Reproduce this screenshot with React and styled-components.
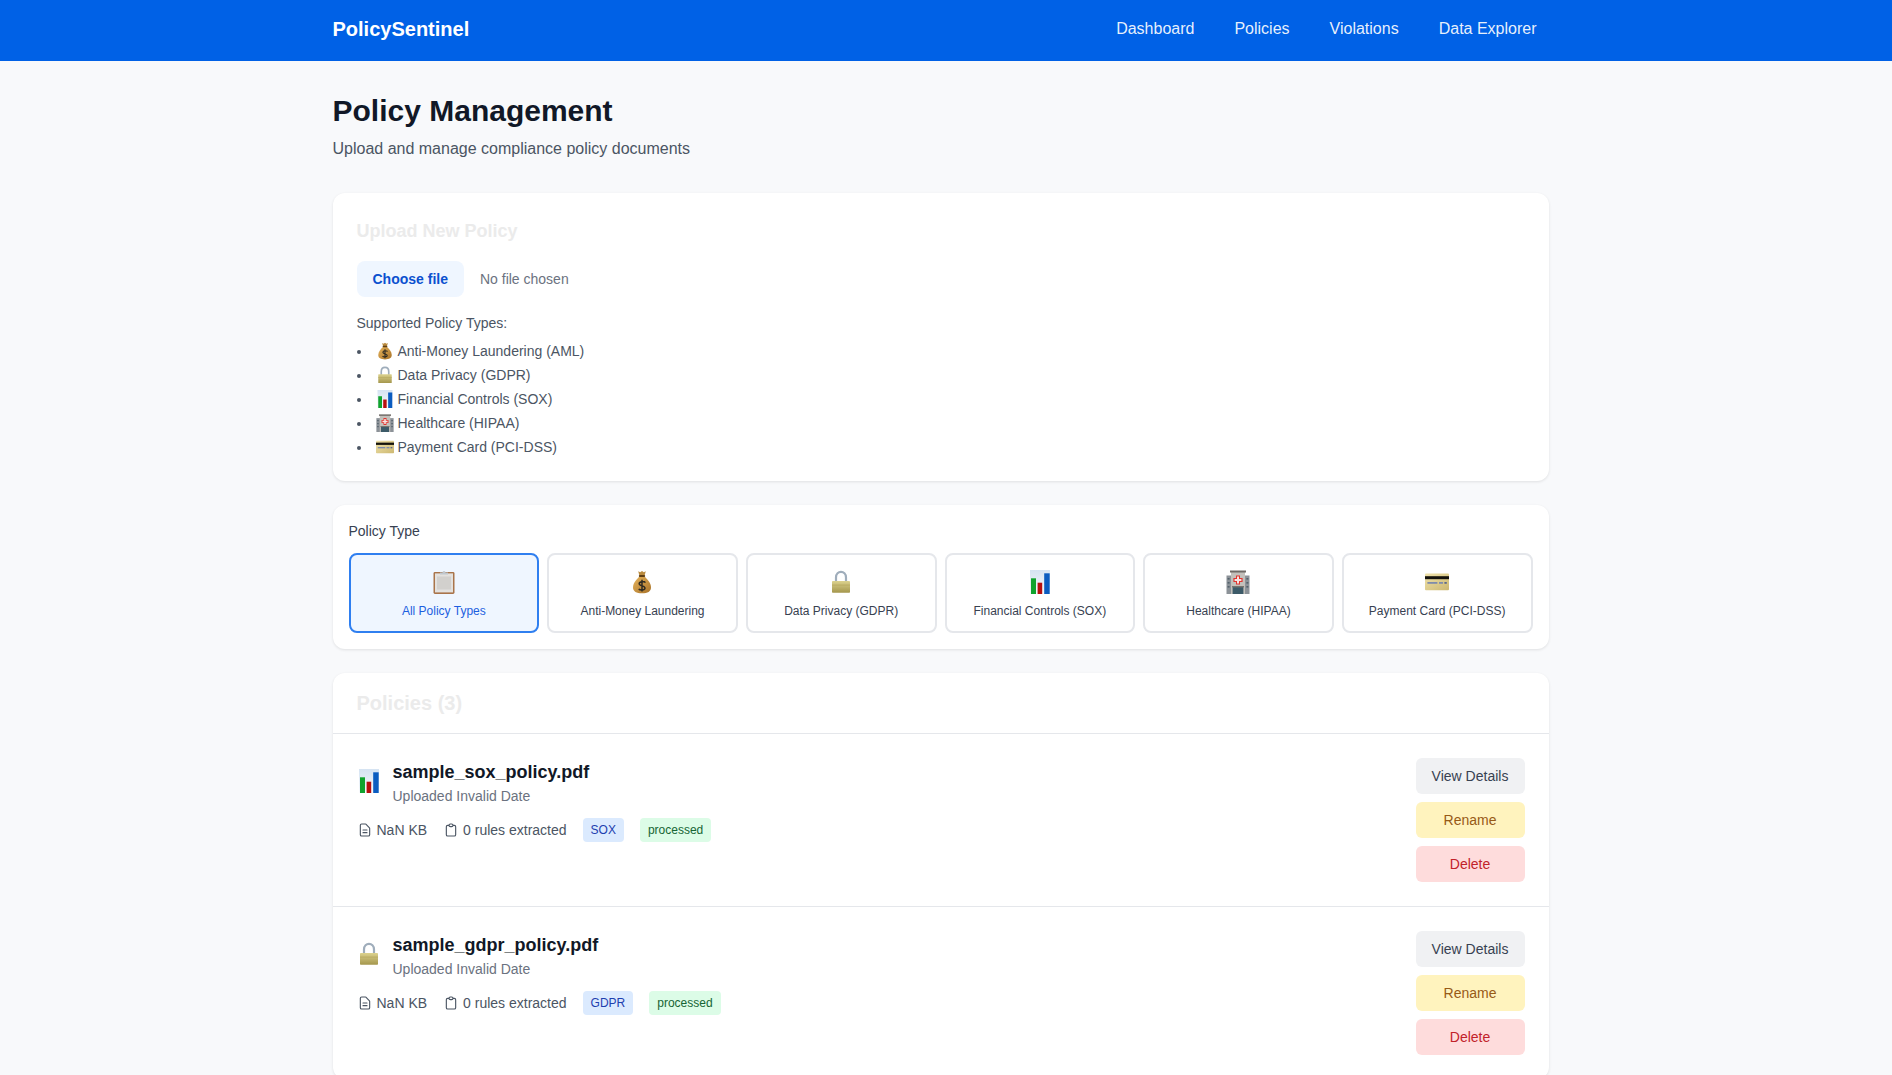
import React from 'react';
import styled, { createGlobalStyle } from 'styled-components';
import { HiOutlineDocumentText, HiOutlineClipboard } from 'react-icons/hi';

const GlobalStyle = createGlobalStyle`
  html, body {
    margin: 0;
    padding: 0;
    background: #f8f9fb;
    font-family: "Liberation Sans", Arial, sans-serif;
    color: #111827;
  }
  * { box-sizing: border-box; }
`;

const Header = styled.header`
  background: #0061e6;
  height: 61px;
`;

const Wrap = styled.div`
  width: 1216px;
  margin-left: 332.5px;
`;

const HeaderInner = styled(Wrap)`
  display: flex;
  align-items: center;
  justify-content: space-between;
  height: 58px;
`;

const Logo = styled.div`
  color: #fff;
  font-size: 20px;
  font-weight: 700;
`;

const Nav = styled.nav`
  display: flex;
  gap: 16px;
`;

const NavLink = styled.a`
  color: rgba(255, 255, 255, 0.92);
  font-size: 16px;
  line-height: 24px;
  padding: 4px 12px;
  cursor: pointer;
`;

const Main = styled(Wrap)`
  padding: 32px 0;
`;

const Title = styled.h1`
  margin: 0 0 8px;
  font-size: 30px;
  line-height: 36px;
  font-weight: 700;
  color: #111827;
`;

const Subtitle = styled.p`
  margin: 0 0 32px;
  font-size: 16px;
  line-height: 24px;
  color: #4b5563;
`;

const Card = styled.section`
  background: #fff;
  border-radius: 12px;
  box-shadow: 0 1px 3px rgba(0, 0, 0, 0.1);
  margin-bottom: 24px;
`;

const UploadCard = styled(Card)`
  padding: 24px 24px 22px;
`;

const UploadHeading = styled.h2`
  margin: 0;
  font-size: 18px;
  line-height: 28px;
  font-weight: 700;
  color: #ebebeb;
`;

const ListHeading = styled(UploadHeading)`
  font-size: 20px;
`;

const FileRow = styled.div`
  display: flex;
  align-items: center;
  gap: 16px;
  margin-top: 16px;
  font-size: 14px;
  line-height: 20px;
  color: #6b7280;
`;

const FileButton = styled.label`
  padding: 8px 16px;
  border-radius: 8px;
  background: #eff6ff;
  color: #0b50cf;
  font-weight: 700;
  cursor: pointer;

  input {
    display: none;
  }
`;

const SupportedLabel = styled.p`
  margin: 16px 0 6px;
  font-size: 14px;
  line-height: 20px;
  color: #4b5563;
`;

const SupportedList = styled.ul`
  margin: 0;
  padding: 0;
  list-style-position: inside;
  font-size: 14px;
  line-height: 24px;
  color: #4b5563;
`;

const ListEmoji = styled.span`
  display: inline-block;
  width: 18px;
  height: 18px;
  margin-right: 4px;
  vertical-align: -4px;
`;

const FilterCard = styled(Card)`
  padding: 16px;
`;

const FilterLabel = styled.div`
  margin-bottom: 12px;
  font-size: 14px;
  line-height: 20px;
  color: #374151;
`;

const FilterGrid = styled.div`
  display: grid;
  grid-template-columns: repeat(6, 1fr);
  gap: 8px;
`;

const FilterButton = styled.button`
  display: flex;
  flex-direction: column;
  align-items: center;
  height: 80px;
  padding: 12px;
  border: 2px solid ${(props) => (props.$active ? '#2f7ff0' : '#e5e7eb')};
  border-radius: 8px;
  background: ${(props) => (props.$active ? '#eff6ff' : '#fff')};
  color: ${(props) => (props.$active ? '#1d5fe0' : '#374151')};
  font-family: inherit;
  font-size: 12px;
  line-height: 16px;
  cursor: pointer;
`;

const FilterEmoji = styled.span`
  display: block;
  width: 24px;
  height: 24px;
  margin: 3px 0 9px;
`;

const ListHeader = styled.div`
  height: 61px;
  padding: 16px 24px;
  border-bottom: 1px solid #e5e7eb;
`;

const PolicyRow = styled.article`
  display: flex;
  justify-content: space-between;
  align-items: flex-start;
  padding: 24px;
  border-bottom: 1px solid #e5e7eb;

  &:last-child {
    border-bottom: 0;
  }
`;

const RowHead = styled.div`
  display: flex;
  align-items: center;
  gap: 12px;
`;

const RowEmoji = styled.span`
  display: block;
  width: 24px;
  height: 24px;
  margin-top: -3px;
`;

const FileName = styled.h3`
  margin: 0;
  font-size: 18px;
  line-height: 28px;
  font-weight: 700;
  color: #111827;
`;

const UploadDate = styled.p`
  margin: 0;
  font-size: 14px;
  line-height: 20px;
  color: #6b7280;
`;

const MetaRow = styled.div`
  display: flex;
  align-items: center;
  gap: 16px;
  margin-top: 12px;
  font-size: 14px;
  color: #4b5563;
`;

const MetaItem = styled.span`
  display: flex;
  align-items: center;
  gap: 4px;

  svg {
    width: 16px;
    height: 16px;
    stroke-width: 1.7;
  }
`;

const Badge = styled.span`
  padding: 4px 8px;
  border-radius: 4px;
  font-size: 12px;
  line-height: 16px;
  background: ${(props) => (props.$kind === 'status' ? '#dcfce7' : '#dbeafe')};
  color: ${(props) => (props.$kind === 'status' ? '#166534' : '#1e40af')};
`;

const Actions = styled.div`
  display: flex;
  flex-direction: column;
  gap: 8px;
  width: 109px;
`;

const ActionButton = styled.button`
  height: 36px;
  padding: 8px 0;
  border: 0;
  border-radius: 6px;
  font-family: inherit;
  font-size: 14px;
  line-height: 20px;
  cursor: pointer;
  background: ${(props) => props.$bg};
  color: ${(props) => props.$fg};
`;

const MoneyBag = () => (
  <svg viewBox="0 0 24 24" width="100%" height="100%">
    <defs>
      <linearGradient id="bagFill" x1="0" y1="0" x2="1" y2="1">
        <stop offset="0" stopColor="#e6b45c" />
        <stop offset="1" stopColor="#a87228" />
      </linearGradient>
    </defs>
    <path d="M8.2 1.2 L10.2 2.2 L12 1 L13.8 2.2 L15.8 1.2 L14.6 5.6 L9.4 5.6 Z" fill="#b98a3e" />
    <path d="M9.2 6.8 C6 10 3 13.4 3 17.4 C3 21.4 6.4 23.2 12 23.2 C17.6 23.2 21 21.4 21 17.4 C21 13.4 18 10 14.8 6.8 Z" fill="url(#bagFill)" />
    <rect x="8.8" y="5" width="6.4" height="2" rx="1" fill="#5f3f14" />
    <path d="M15.4 12.6 C14.6 11.3 9.4 11 9.2 13.6 C9 16.4 15.2 15.4 15 18.2 C14.8 20.6 9.6 20.4 8.8 18.8 M12 9.8 V21.6" fill="none" stroke="#2e2a22" strokeWidth="1.5" />
  </svg>
);

const Lock = () => (
  <svg viewBox="0 0 24 24" width="100%" height="100%">
    <defs>
      <linearGradient id="lockFill" x1="0" y1="0" x2="0" y2="1">
        <stop offset="0" stopColor="#dcd28e" />
        <stop offset="1" stopColor="#a4964c" />
      </linearGradient>
    </defs>
    <path d="M7 12 V7.5 C7 0 17 0 17 7.5 V12" fill="none" stroke="#9fadbb" strokeWidth="2.2" />
    <rect x="3" y="11" width="18" height="11.8" rx="0.8" fill="url(#lockFill)" />
    <rect x="3" y="14.6" width="18" height="1" fill="#b8ab62" />
  </svg>
);

const BarChart = () => (
  <svg viewBox="0 0 24 24" width="100%" height="100%">
    <defs>
      <linearGradient id="chartBack" x1="0" y1="0" x2="0" y2="1">
        <stop offset="0" stopColor="#d5e3f2" />
        <stop offset="1" stopColor="#f7f9fc" />
      </linearGradient>
    </defs>
    <rect x="2" y="0" width="20" height="24" fill="url(#chartBack)" />
    <rect x="3" y="8.3" width="5" height="15.7" fill="#10a32e" />
    <rect x="9.6" y="12.7" width="4.6" height="11.3" fill="#b80f0f" />
    <rect x="16.2" y="3.3" width="5.5" height="20.7" fill="#0b5cc0" />
  </svg>
);

const Hospital = () => (
  <svg viewBox="0 0 24 24" width="100%" height="100%">
    <rect x="0.5" y="5.5" width="23" height="18.5" fill="#8c9298" />
    <rect x="5" y="2" width="14" height="22" fill="#c3c0bb" />
    <rect x="4" y="0.5" width="16" height="2" fill="#6f6a66" />
    <path d="M10 5.4 h4 v2.6 h2.6 v4 h-2.6 v2.6 h-4 v-2.6 h-2.6 v-4 h2.6 z" fill="#e2352f" />
    <path d="M11 6.6 h2 v2.5 h2.4 v1.8 h-2.4 v2.5 h-2 v-2.5 h-2.4 v-1.8 h2.4 z" fill="#f7e4e2" />
    <rect x="1.6" y="8" width="2" height="1.6" fill="#54626c" />
    <rect x="1.6" y="12" width="2" height="1.6" fill="#54626c" />
    <rect x="1.6" y="16" width="2" height="1.6" fill="#54626c" />
    <rect x="20.4" y="8" width="2" height="1.6" fill="#54626c" />
    <rect x="20.4" y="12" width="2" height="1.6" fill="#54626c" />
    <rect x="20.4" y="16" width="2" height="1.6" fill="#54626c" />
    <rect x="6.6" y="17" width="10.8" height="7" fill="#3c5a68" />
    <rect x="6" y="16" width="12" height="1.4" fill="#76736e" />
  </svg>
);

const CreditCard = () => (
  <svg viewBox="0 0 24 24" width="100%" height="100%">
    <defs>
      <linearGradient id="cardFill" x1="0" y1="0" x2="1" y2="1">
        <stop offset="0" stopColor="#efe2ab" />
        <stop offset="1" stopColor="#cdb871" />
      </linearGradient>
    </defs>
    <rect x="0" y="3.5" width="24" height="16.8" rx="1" fill="url(#cardFill)" />
    <rect x="0" y="6.2" width="24" height="3" fill="#14120c" />
    <rect x="2.4" y="12" width="10" height="1.8" fill="#7f8cab" />
    <rect x="14" y="12" width="4" height="1.8" fill="#7f8cab" />
    <rect x="19.4" y="12" width="2.4" height="1.8" fill="#5e6a8c" />
  </svg>
);

const ClipboardEmoji = () => (
  <svg viewBox="0 0 24 24" width="100%" height="100%">
    <rect x="1.5" y="2" width="21" height="22" rx="1.4" fill="#a9744a" />
    <rect x="3" y="3.4" width="18" height="19" fill="#e3e1de" />
    <rect x="5" y="6.5" width="14" height="13" fill="#d2d0cd" />
    <path d="M8 2.6 h2.5 a1.5 1.5 0 0 1 3 0 h2.5 v2 h-8 z" fill="#c0c7ce" />
  </svg>
);

const policyTypes = [
  { icon: <MoneyBag />, long: 'Anti-Money Laundering (AML)', short: 'Anti-Money Laundering' },
  { icon: <Lock />, long: 'Data Privacy (GDPR)', short: 'Data Privacy (GDPR)' },
  { icon: <BarChart />, long: 'Financial Controls (SOX)', short: 'Financial Controls (SOX)' },
  { icon: <Hospital />, long: 'Healthcare (HIPAA)', short: 'Healthcare (HIPAA)' },
  { icon: <CreditCard />, long: 'Payment Card (PCI-DSS)', short: 'Payment Card (PCI-DSS)' },
];

const policies = [
  { name: 'sample_sox_policy.pdf', icon: <BarChart />, tag: 'SOX' },
  { name: 'sample_gdpr_policy.pdf', icon: <Lock />, tag: 'GDPR' },
];

export default function App() {
  return (
    <>
      <GlobalStyle />
      <Header>
        <HeaderInner>
          <Logo>PolicySentinel</Logo>
          <Nav>
            <NavLink>Dashboard</NavLink>
            <NavLink>Policies</NavLink>
            <NavLink>Violations</NavLink>
            <NavLink>Data Explorer</NavLink>
          </Nav>
        </HeaderInner>
      </Header>
      <Main>
        <Title>Policy Management</Title>
        <Subtitle>Upload and manage compliance policy documents</Subtitle>

        <UploadCard>
          <UploadHeading>Upload New Policy</UploadHeading>
          <FileRow>
            <FileButton>
              Choose file
              <input type="file" accept=".pdf" />
            </FileButton>
            No file chosen
          </FileRow>
          <SupportedLabel>Supported Policy Types:</SupportedLabel>
          <SupportedList>
            {policyTypes.map((type) => (
              <li key={type.long}>
                <ListEmoji>{type.icon}</ListEmoji>
                {type.long}
              </li>
            ))}
          </SupportedList>
        </UploadCard>

        <FilterCard>
          <FilterLabel>Policy Type</FilterLabel>
          <FilterGrid>
            <FilterButton $active>
              <FilterEmoji><ClipboardEmoji /></FilterEmoji>
              All Policy Types
            </FilterButton>
            {policyTypes.map((type) => (
              <FilterButton key={type.short}>
                <FilterEmoji>{type.icon}</FilterEmoji>
                {type.short}
              </FilterButton>
            ))}
          </FilterGrid>
        </FilterCard>

        <Card>
          <ListHeader>
            <ListHeading>Policies (3)</ListHeading>
          </ListHeader>
          {policies.map((policy) => (
            <PolicyRow key={policy.name}>
              <div>
                <RowHead>
                  <RowEmoji>{policy.icon}</RowEmoji>
                  <div>
                    <FileName>{policy.name}</FileName>
                    <UploadDate>Uploaded Invalid Date</UploadDate>
                  </div>
                </RowHead>
                <MetaRow>
                  <MetaItem><HiOutlineDocumentText />NaN KB</MetaItem>
                  <MetaItem><HiOutlineClipboard />0 rules extracted</MetaItem>
                  <Badge>{policy.tag}</Badge>
                  <Badge $kind="status">processed</Badge>
                </MetaRow>
              </div>
              <Actions>
                <ActionButton $bg="#f0f1f3" $fg="#374151">View Details</ActionButton>
                <ActionButton $bg="#fff3be" $fg="#975a16">Rename</ActionButton>
                <ActionButton $bg="#fedcdc" $fg="#c2222a">Delete</ActionButton>
              </Actions>
            </PolicyRow>
          ))}
        </Card>
      </Main>
    </>
  );
}
